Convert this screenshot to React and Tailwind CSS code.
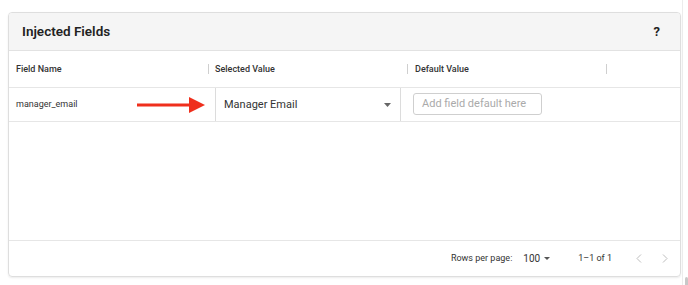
import React from "react";

function Sep() {
  return <div className="w-px h-[10px] bg-[#cfcfcf]" />;
}

export default function App() {
  return (
    <div className="w-[688px] h-[285px] bg-white flex overflow-hidden" style={{ fontFamily: "Roboto, 'Liberation Sans', sans-serif" }}>
      <div className="w-[682px] pt-[12px] pl-[8px] pr-[1px]">
        <div className="w-[673px] h-[265px] border border-[#dedede] rounded-[4px] shadow-[0_1px_2px_rgba(0,0,0,0.08)] flex flex-col overflow-hidden">
          {/* Header */}
          <div className="h-[38px] bg-[#f5f5f5] border-b border-[#e2e2e2] flex items-center justify-between pl-[13px] pr-[20px] shrink-0">
            <span className="text-[13.5px] font-semibold text-[#222]">Injected Fields</span>
            <span className="text-[13px] font-bold text-[#222]">?</span>
          </div>
          {/* Column header */}
          <div className="h-[37px] border-b border-[#e6e6e6] flex items-center text-[9px] font-medium text-[#333] shrink-0">
            <div className="w-[199px] pl-[7px] pt-[1px]">Field Name</div>
            <Sep />
            <div className="w-[198px] pl-[6px] pt-[1px]">Selected Value</div>
            <Sep />
            <div className="w-[198px] pl-[7px] pt-[1px]">Default Value</div>
            <Sep />
          </div>
          {/* Data row */}
          <div className="h-[34px] border-b border-[#e6e6e6] flex items-stretch shrink-0">
            <div className="w-[199px] pl-[7px] pt-[1px] flex items-center text-[9px] text-[#333] relative">
              manager_email
              <svg className="absolute left-[128px] top-[8px]" width="70" height="18" viewBox="0 0 70 18">
                <line x1="0" y1="9" x2="54" y2="9" stroke="#ef2f1c" strokeWidth="3" />
                <polygon points="52,1 68,9 52,17" fill="#ef2f1c" />
              </svg>
            </div>
            <div className="w-[199px] pl-[7px] flex items-stretch">
              <div className="relative w-[186px] border-l border-r border-[#dcdcdc] flex items-center justify-between pl-[8px] pr-[9px] pt-[1px] overflow-hidden">
                <span className="absolute left-[9px] top-[-6px] text-[8px] text-[#999] leading-none">field</span>
                <span className="text-[11px] text-[#333]">Manager Email</span>
                <svg width="7" height="4" viewBox="0 0 7 4"><polygon points="0,0 7,0 3.5,4" fill="#666" /></svg>
              </div>
            </div>
            <div className="pl-[6px] flex items-center">
              <div className="w-[129px] h-[22px] border border-[#cfcfcf] rounded-[3px] flex items-center pl-[8px] text-[11px] text-[#aaa] -mt-[1px]">
                Add field default here
              </div>
            </div>
          </div>
          <div className="flex-1 border-b border-[#e6e6e6]" />
          {/* Footer */}
          <div className="h-[35px] flex items-center justify-end text-[9px] text-[#333] pr-[12px] shrink-0">
            <span>Rows per page:</span>
            <span className="ml-[11px] text-[10px]">100</span>
            <svg className="ml-[4px]" width="6" height="3" viewBox="0 0 6 3"><polygon points="0,0 6,0 3,3" fill="#555" /></svg>
            <span className="ml-[28px]">1–1 of 1</span>
            <svg className="ml-[24px]" width="6" height="9" viewBox="0 0 6 9"><polyline points="5,0.5 1,4.5 5,8.5" fill="none" stroke="#bdbdbd" strokeWidth="1" /></svg>
            <svg className="ml-[20px]" width="6" height="9" viewBox="0 0 6 9"><polyline points="1,0.5 5,4.5 1,8.5" fill="none" stroke="#bdbdbd" strokeWidth="1" /></svg>
          </div>
        </div>
      </div>
      <div className="w-[6px] border-l border-[#ececec] flex flex-col justify-end">
        <div className="h-[8px] ml-[2px] bg-[#c8c8c8] rounded-t-[2px]" />
      </div>
    </div>
  );
}
